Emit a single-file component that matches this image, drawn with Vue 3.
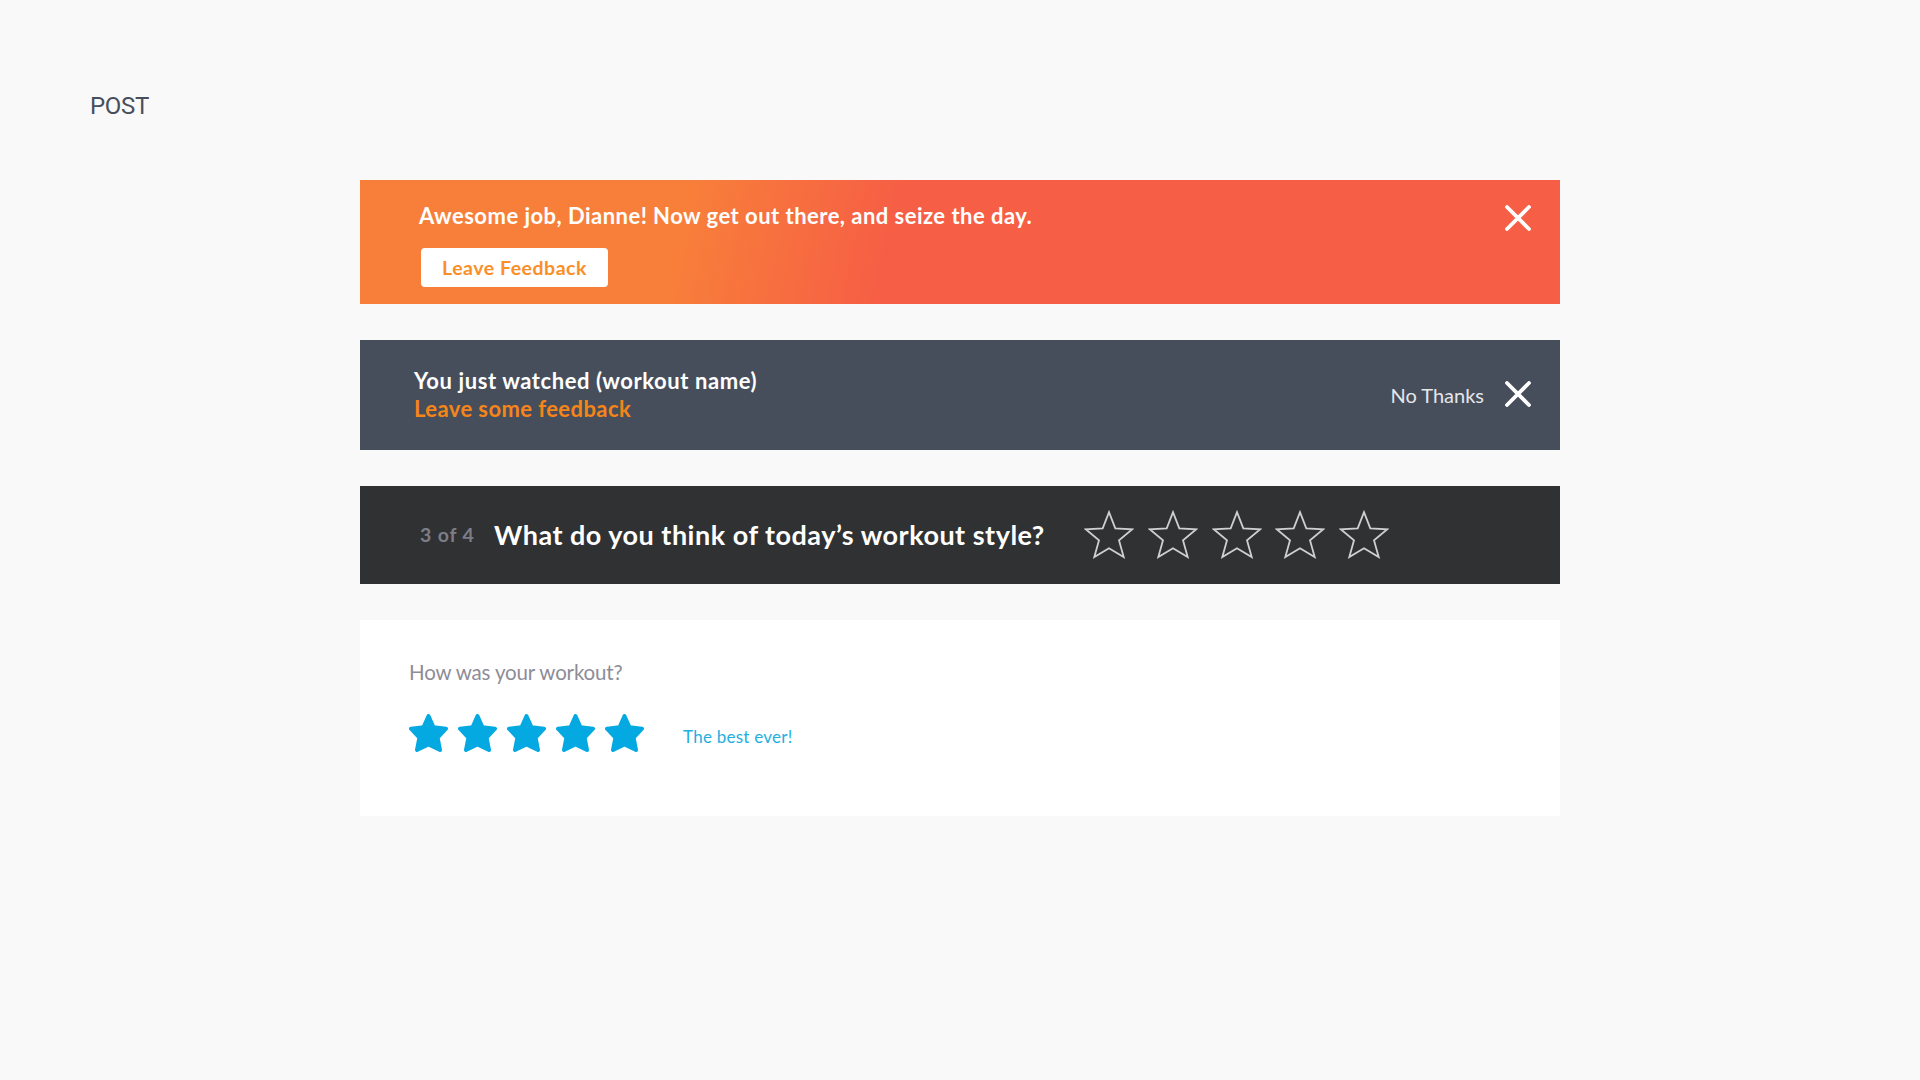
<script setup>
const stars = [1, 2, 3, 4, 5]
</script>

<template>
  <main class="page">
    <h1 class="label">POST</h1>
    <div class="stack">
      <section class="banner job">
        <div class="job-body">
          <p class="title job-title">Awesome job, Dianne! Now get out there, and seize the day.</p>
          <button class="cta"><span>Leave Feedback</span></button>
        </div>
        <button class="close" aria-label="Close">
          <svg viewBox="0 0 26 26"><path d="M2 2L24 24M24 2L2 24" /></svg>
        </button>
      </section>

      <section class="banner watched">
        <div class="watched-body">
          <p class="title watched-title">You just watched (workout name)</p>
          <a class="title feedback">Leave some feedback</a>
        </div>
        <a class="no-thanks">No Thanks</a>
        <button class="close" aria-label="Close">
          <svg viewBox="0 0 26 26"><path d="M2 2L24 24M24 2L2 24" /></svg>
        </button>
      </section>

      <section class="banner question">
        <span class="step">3 of 4</span>
        <p class="ask">What do you think of today’s workout style?</p>
        <div class="outline-stars">
          <svg v-for="s in stars" :key="s" viewBox="0 0 50 49">
            <path d="M25 2.2L31.3 18.4L48 19.4L35 30.3L39.7 47L25 38.3L10.3 47L15 30.3L2 19.4L18.7 18.4Z" />
          </svg>
        </div>
      </section>

      <section class="banner rating">
        <p class="how">How was your workout?</p>
        <div class="rating-row">
          <div class="solid-stars">
            <svg v-for="s in stars" :key="s" viewBox="0 0 39 38">
              <path d="M19.5 2L24.5 13.2L37 14.7L28.6 23.6L31 36L19.5 30.5L8 36L10.4 23.6L2 14.7L14.5 13.2Z" />
            </svg>
          </div>
          <span class="verdict">The best ever!</span>
        </div>
      </section>
    </div>
  </main>
</template>

<style>
body {
  margin: 0;
  background: #f9f9f9;
}
</style>

<style scoped>
.page {
  box-sizing: border-box;
  width: 1920px;
  height: 1080px;
  padding-top: 92px;
  overflow: hidden;
  background: #f9f9f9;
  font-family: Lato, "Liberation Sans", sans-serif;
}
h1, p { margin: 0; }
p, a, span { white-space: nowrap; }
button {
  margin: 0;
  padding: 0;
  border: 0;
  background: none;
  font-family: inherit;
}
svg { display: block; }
.label {
  margin-left: 90px;
  height: 28px;
  font: 400 24px/28px Roboto, sans-serif;
  letter-spacing: -0.3px;
  color: #474e5c;
}
.stack {
  display: flex;
  flex-direction: column;
  gap: 36px;
  width: 1200px;
  margin: 60px auto 0;
}
.banner {
  display: flex;
  box-sizing: border-box;
}
.title {
  font-size: 22px;
  line-height: 28px;
  font-weight: 700;
}
.close { width: 26px; height: 26px; }
.close path {
  fill: none;
  stroke: #fff;
  stroke-width: 3.8;
  stroke-linecap: round;
}

.job {
  height: 124px;
  justify-content: space-between;
  padding: 25px 29px 0 59px;
  background: linear-gradient(102deg, #f87f3a 27%, #f65e45 44.5%);
}
.job-body { margin-top: -3px; }
.job-title { color: #fff; letter-spacing: 0.47px; }
.cta {
  display: block;
  width: 187px;
  height: 39px;
  margin: 18px 0 0 2px;
  border-radius: 4px;
  background: #fff;
  color: #fb8f27;
  font-size: 19.5px;
  line-height: 39px;
  font-weight: 700;
  letter-spacing: 0.52px;
}

.watched {
  height: 110px;
  align-items: center;
  padding: 0 29px 0 54px;
  background: #474e5b;
}
.watched .close { margin-bottom: 2px; }
.watched-body {
  display: flex;
  flex-direction: column;
  flex: 1;
}
.watched-title { color: #fff; letter-spacing: 0.58px; }
.feedback { color: #f68519; letter-spacing: 0.41px; }
.no-thanks {
  margin-right: 21px;
  color: #e4e6ea;
  font-size: 20px;
  line-height: 24px;
}

.question {
  height: 98px;
  align-items: center;
  padding-left: 60px;
  background: #303133;
}
.step {
  width: 74px;
  color: #7d7d88;
  font-size: 19.5px;
  line-height: 24px;
  font-weight: 700;
  letter-spacing: 0.85px;
}
.ask {
  width: 590.4px;
  color: #fff;
  font-size: 27px;
  line-height: 32px;
  font-weight: 700;
  letter-spacing: 0.5px;
}
.outline-stars {
  display: flex;
  gap: 13.7px;
  margin-bottom: 2px;
}
.outline-stars svg { width: 50px; height: 49px; }
.outline-stars path {
  fill: none;
  stroke: #cfcfd1;
  stroke-width: 1.8;
}

.rating {
  height: 196px;
  flex-direction: column;
  padding: 40px 0 0 49px;
  background: #fff;
}
.how {
  color: #8d8c97;
  font-size: 20.5px;
  line-height: 24px;
  letter-spacing: -0.15px;
}
.rating-row {
  display: flex;
  align-items: center;
  margin-top: 30px;
}
.solid-stars { display: flex; gap: 10px; }
.solid-stars svg { width: 39px; height: 38px; }
.solid-stars path {
  fill: #05a9e2;
  stroke: #05a9e2;
  stroke-width: 4;
  stroke-linejoin: round;
}
.verdict {
  margin: 7px 0 0 39px;
  color: #1eb0e0;
  font-size: 17px;
  line-height: 20px;
  letter-spacing: 0.25px;
}
</style>
